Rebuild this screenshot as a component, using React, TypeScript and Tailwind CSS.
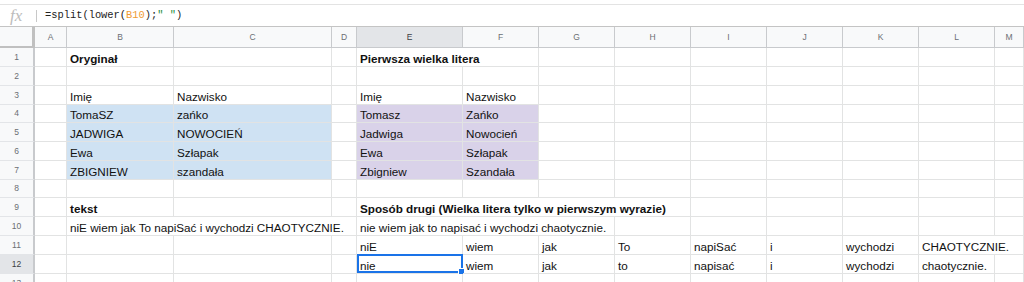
import clsx from 'clsx'

type Cell = {
  t?: string
  b?: boolean
  span?: 2 | 3 | 4
  fill?: 'blue' | 'purple'
  sel?: boolean
}

const COLS = ['A', 'B', 'C', 'D', 'E', 'F', 'G', 'H', 'I', 'J', 'K', 'L', 'M']

// sparse rows: column letter -> cell; spanned neighbours are skipped
const ROWS: Record<string, Cell>[] = [
  { B: { t: 'Oryginał', b: true }, E: { t: 'Pierwsza wielka litera', b: true, span: 2 } },
  {},
  { B: { t: 'Imię' }, C: { t: 'Nazwisko' }, E: { t: 'Imię' }, F: { t: 'Nazwisko' } },
  {
    B: { t: 'TomaSZ', fill: 'blue' },
    C: { t: 'zańko', fill: 'blue' },
    E: { t: 'Tomasz', fill: 'purple' },
    F: { t: 'Zańko', fill: 'purple' },
  },
  {
    B: { t: 'JADWIGA', fill: 'blue' },
    C: { t: 'NOWOCIEŃ', fill: 'blue' },
    E: { t: 'Jadwiga', fill: 'purple' },
    F: { t: 'Nowocień', fill: 'purple' },
  },
  {
    B: { t: 'Ewa', fill: 'blue' },
    C: { t: 'Szłapak', fill: 'blue' },
    E: { t: 'Ewa', fill: 'purple' },
    F: { t: 'Szłapak', fill: 'purple' },
  },
  {
    B: { t: 'ZBIGNIEW', fill: 'blue' },
    C: { t: 'szandała', fill: 'blue' },
    E: { t: 'Zbigniew', fill: 'purple' },
    F: { t: 'Szandała', fill: 'purple' },
  },
  {},
  {
    B: { t: 'tekst', b: true },
    E: { t: 'Sposób drugi (Wielka litera tylko w pierwszym wyrazie)', b: true, span: 4 },
  },
  {
    B: { t: 'niE wiem jak To napiSać i wychodzi CHAOTYCZNIE.', span: 3 },
    E: { t: 'nie wiem jak to napisać i wychodzi chaotycznie.', span: 3 },
  },
  {
    E: { t: 'niE' },
    F: { t: 'wiem' },
    G: { t: 'jak' },
    H: { t: 'To' },
    I: { t: 'napiSać' },
    J: { t: 'i' },
    K: { t: 'wychodzi' },
    L: { t: 'CHAOTYCZNIE.', span: 2 },
  },
  {
    E: { t: 'nie', sel: true },
    F: { t: 'wiem' },
    G: { t: 'jak' },
    H: { t: 'to' },
    I: { t: 'napisać' },
    J: { t: 'i' },
    K: { t: 'wychodzi' },
    L: { t: 'chaotycznie.' },
  },
  {},
]

function rowCells(row: Record<string, Cell>) {
  const out: { col: string; cell: Cell }[] = []
  let skip = 0
  for (const col of COLS) {
    if (skip > 0) {
      skip--
      continue
    }
    const cell = row[col] ?? {}
    out.push({ col, cell })
    if (cell.span) skip = cell.span - 1
  }
  return out
}

function GridCell({ cell }: { cell: Cell }) {
  return (
    <div
      className={clsx(
        'relative flex items-end whitespace-nowrap border-r border-b border-[#e2e3e3] pl-[3px] text-[11.7px] leading-[14px] text-[#111]',
        cell.span === 2 && 'col-span-2',
        cell.span === 3 && 'col-span-3',
        cell.span === 4 && 'col-span-4',
        cell.fill === 'blue' && 'bg-[#cfe2f3]',
        cell.fill === 'purple' && 'bg-[#d9d2e9]',
        cell.b && 'font-bold',
      )}
    >
      {cell.t}
      {cell.sel && (
        <div className="absolute -top-px left-0 -right-px bottom-0 border-2 border-[#1a73e8]">
          <div className="absolute -right-[4px] -bottom-[4px] h-[7px] w-[7px] border border-white bg-[#1a73e8]" />
        </div>
      )}
    </div>
  )
}

export default function App() {
  return (
    <div className="h-[282px] w-[1024px] overflow-hidden bg-white font-['Liberation_Sans',Arial,sans-serif]">
      {/* formula bar */}
      <div className="h-[5px] border-b border-[#e3e3e3]" />
      <div className="flex h-[22px] items-center border-b border-[#c4c4c4]">
        <span className="ml-[10px] w-[18px] font-['Liberation_Serif',serif] text-[17px] italic leading-none text-[#bcbcbc]">
          fx
        </span>
        <span className="ml-[8px] h-[12px] w-px bg-[#c8c8c8]" />
        <span className="ml-[8px] font-['Liberation_Mono',monospace] text-[10.4px] leading-none text-[#222]">
          =split(lower(<span className="text-[#f09b32]">B10</span>);<span className="text-[#1e8e3e]">" "</span>)
        </span>
      </div>

      {/* sheet */}
      <div className="grid grid-cols-[35px_32px_107px_158px_25px_106px_76px_76px_76px_76px_76px_76px_76px_1fr] grid-rows-[21px_19px_19px_19px_18px_19px_19px_19px_18px_19px_19px_19px_19px_19px]">
        <div className="border-r-[3px] border-b-[2px] border-[#c0c0c0] bg-[#f8f9fa]" />
        {COLS.map((c) => (
          <div
            key={c}
            className={clsx(
              'flex items-center justify-center border-r border-b border-[#c8cacd] text-[8.5px] leading-none',
              c === 'E' ? 'bg-[#e3e5e8] text-[#3c4043]' : 'bg-[#f8f9fa] text-[#6b6f73]',
            )}
          >
            {c}
          </div>
        ))}

        {ROWS.map((row, i) => (
          <div key={i} className="contents">
            <div
              className={clsx(
                'flex items-center justify-center border-r-2 border-b border-r-[#c8cacd] border-b-[#e3e5e8] text-[8.5px] leading-none',
                i === 11 ? 'bg-[#e3e5e8] text-[#3c4043]' : 'bg-[#f8f9fa] text-[#6b6f73]',
              )}
            >
              {i + 1}
            </div>
            {rowCells(row).map(({ col, cell }) => (
              <GridCell key={col} cell={cell} />
            ))}
          </div>
        ))}
      </div>
    </div>
  )
}
